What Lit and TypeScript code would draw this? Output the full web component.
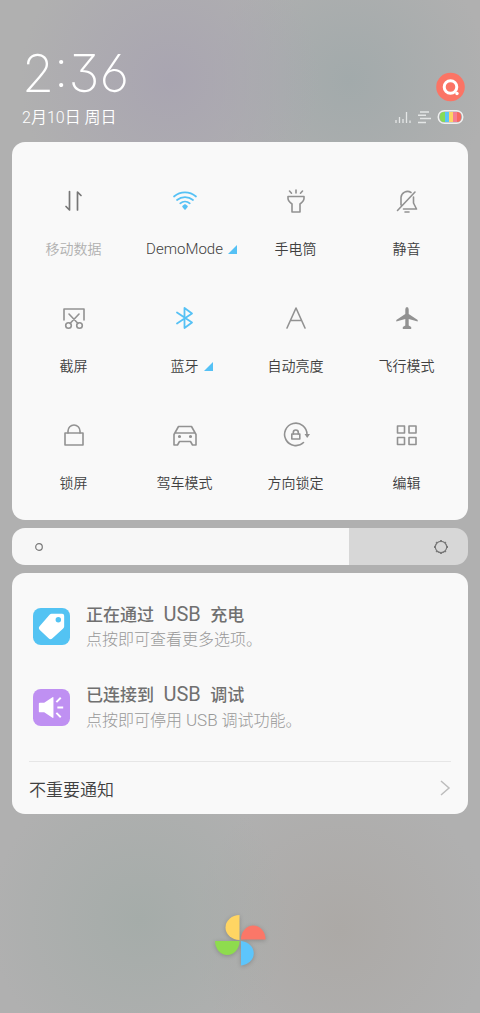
import { LitElement, html, css, svg, nothing, type TemplateResult } from "lit";
import { customElement, property, state } from "lit/decorators.js";
import { classMap } from "lit/directives/class-map.js";

const icons: Record<string, TemplateResult> = {
  data: svg`<path d="M9.500 4.500v18.500l-3.500-3.500M17.500 23V5l3.500 3.500" stroke="#777" stroke-width="1.700"/>`,
  wifi: svg`<path d="M3 9.500a17 17 0 0 1 22 0M6 13a12.500 12.500 0 0 1 16 0M9.200 16.300a7.500 7.500 0 0 1 9.600 0" stroke-width="1.700"/><path d="M14 18l2 1.500-2 2.500-2-2.500z" fill="currentColor"/>`,
  torch: svg`<path d="M6 9.500h16v2q0 2.500-4 5.500v8h-8v-8q-4-3-4-5.500zM14 3v3M7.500 4l2 2.200M20.500 4l-2 2.200"/>`,
  mute: svg`<path d="M8 18V10.500a6.500 6.500 0 0 1 10-5M20.500 10v6l3 6H10.500M12 25h4M4.500 23.500L22 5"/>`,
  capture: svg`<path d="M4 16V5h20v11M9 10l9 9.500M19 10l-9 9.500"/><circle cx="8.500" cy="21.500" r="2.800"/><circle cx="19.500" cy="21.500" r="2.800"/>`,
  bluetooth: svg`<path d="M6 8.500l15 10-7.500 5.500V4l7.500 5.500-15 10" stroke-width="1.800"/>`,
  auto: svg`<path d="M5 24L14 4l9 20M8.500 16.500h11"/>`,
  plane: svg`<path d="M14 3q1.700 0 1.700 2.500v4.500l9 6v1.500l-9-2.500v6.500l2.500 1.500v2H9.800v-2l2.500-1.500V15l-9 2.500V16l9-6V5.500Q12.300 3 14 3z" fill="currentColor" stroke="none"/>`,
  lock: svg`<rect x="5" y="12" width="18" height="12"/><path d="M8 12V10a6 6 0 0 1 12 0v2"/>`,
  car: svg`<path d="M3 24V13.500L7.500 5.500h13l4.500 8V24h-3.500l-2-3.500h-11l-2 3.500zM4 12h20"/><circle cx="8.500" cy="15.500" r=".8"/><circle cx="19.500" cy="15.500" r=".8"/>`,
  rotate: svg`<path d="M21.500 21.500A11.200 11.200 0 1 1 25 13.500"/><path d="M22.500 13h5.500l-2.800 4z" fill="currentColor" stroke="none"/><rect x="9.800" y="13" width="8" height="5"/><path d="M11.300 13v-1.500a2.500 2.500 0 0 1 5 0V13"/>`,
  edit: svg`<rect x="4.500" y="5" width="7" height="7"/><rect x="16" y="5" width="7" height="7"/><rect x="4.500" y="16.500" width="7" height="7"/><rect x="16" y="16.500" width="7" height="7"/>`,
};

interface Tile {
  icon: string;
  label: string;
  on?: boolean;
  dim?: boolean;
}

const tiles: Tile[] = [
  { icon: "data", label: "移动数据", dim: true },
  { icon: "wifi", label: "DemoMode", on: true },
  { icon: "torch", label: "手电筒" },
  { icon: "mute", label: "静音" },
  { icon: "capture", label: "截屏" },
  { icon: "bluetooth", label: "蓝牙", on: true },
  { icon: "auto", label: "自动亮度" },
  { icon: "plane", label: "飞行模式" },
  { icon: "lock", label: "锁屏" },
  { icon: "car", label: "驾车模式" },
  { icon: "rotate", label: "方向锁定" },
  { icon: "edit", label: "编辑" },
];

@customElement("quick-tile")
class QuickTile extends LitElement {
  @property({ attribute: false }) tile!: Tile;

  static styles = css`
    :host { display: block; }
    .tile {
      width: 100%;
      display: flex;
      flex-direction: column;
      align-items: center;
      gap: 24px;
      padding: 0;
      border: 0;
      background: none;
      font: inherit;
      color: #404040;
    }
    .glyph {
      width: 28px;
      height: 28px;
      fill: none;
      stroke: currentColor;
      stroke-width: 1.6;
      stroke-linejoin: round;
      stroke-linecap: round;
      color: #929292;
    }
    .on .glyph { color: #55c1f5; }
    .dim { color: #b0b0b0; }
    .label {
      display: flex;
      align-items: center;
      gap: 5px;
      font-size: 14px;
      line-height: 20px;
      white-space: nowrap;
    }
    .latin { font-size: 15px; }
    .more { width: 9px; height: 9px; fill: #55c1f5; }
    .on .label { padding-left: 14px; }
  `;

  render() {
    const { icon, label, on = false, dim = false } = this.tile;
    const latin = /^[\x20-\x7e]+$/.test(label);
    return html`<button class=${classMap({ tile: true, on, dim })}>
      <svg class="glyph" viewBox="0 0 28 28" aria-hidden="true">${icons[icon]}</svg>
      <span class="label">
        <span class=${classMap({ latin })}>${label}</span>
        ${on ? html`<svg class="more" viewBox="0 0 9 9" aria-hidden="true"><path d="M9 0v9H0z" /></svg>` : nothing}
      </span>
    </button>`;
  }
}

@customElement("brightness-bar")
class BrightnessBar extends LitElement {
  @state() private level = 74;

  static styles = css`
    :host { display: block; }
    .bar {
      display: grid;
      align-items: center;
      grid-template-columns: 1fr auto;
      height: 37px;
      border-radius: 13px;
      overflow: hidden;
      color: #777;
    }
    .range {
      grid-area: 1 / 1 / 2 / 3;
      appearance: none;
      width: 100%;
      height: 100%;
      margin: 0;
      background: linear-gradient(to right, #f7f7f7 var(--level), #d7d7d7 var(--level));
    }
    .range::-webkit-slider-thumb { appearance: none; width: 1px; height: 37px; background: none; }
    .low, .high {
      grid-row: 1;
      width: 16px;
      height: 16px;
      fill: none;
      stroke: currentColor;
      stroke-width: 1.2;
      pointer-events: none;
      z-index: 1;
    }
    .low { grid-column: 1; margin-left: 19px; }
    .high { grid-column: 2; margin-right: 19px; }
  `;

  render() {
    return html`<div class="bar">
      <input class="range" type="range" min="0" max="100" aria-label="亮度" .value=${String(this.level)}
        style="--level: ${this.level}%"
        @input=${(e: Event) => (this.level = Number((e.target as HTMLInputElement).value))} />
      <svg class="low" viewBox="0 0 16 16"><circle cx="8" cy="8" r="3.300" /></svg>
      <svg class="high" viewBox="0 0 16 16">
        <circle cx="8" cy="8" r="5.700" />
        <path stroke-width="1.800" d="M8 1v1M8 14v1M1 8h1M14 8h1M3.200 3.200l.7.7M12.100 12.100l.7.7M3.200 12.800l.7-.7M12.100 3.900l.7-.7" />
      </svg>
    </div>`;
  }
}

@customElement("app-root")
class AppRoot extends LitElement {
  static styles = css`
    :host {
      display: block;
      min-height: 100vh;
      box-sizing: border-box;
      padding: 48px 12px 40px;
      font-family: Roboto, "Noto Sans CJK SC", sans-serif;
      font-weight: 350;
      color: #505050;
      background:
        radial-gradient(circle at 170px 80px, #a9a5b1 0, #a9a5b100 150px),
        radial-gradient(circle at 350px 80px, #a2aaab 0, #a2aaab00 140px),
        radial-gradient(circle at 140px 920px, #a5aca9 0, #a5aca900 150px),
        radial-gradient(circle at 340px 930px, #aca9a6 0, #aca9a600 150px),
        #b0b0b0;
    }
    .page { display: flex; flex-direction: column; gap: 8px; }
    .head {
      display: flex;
      justify-content: space-between;
      padding: 0 2px 6px 10px;
      color: #fff;
    }
    .time {
      font: 200 52px/52px Inter, sans-serif;
      font-feature-settings: "cv09", "cv03";
    }
    .date { font-size: 16px; line-height: 20px; margin-top: 8px; }
    .side {
      display: flex;
      flex-direction: column;
      align-items: flex-end;
      gap: 8px;
      padding-top: 24px;
    }
    .search { width: 30px; height: 30px; padding: 0; border: 0; background: none; }
    .search svg { display: block; }
    .status { display: flex; align-items: center; gap: 6px; padding-right: 2px; }
    .card { background: #f9f9f9; border-radius: 13px; }
    .tiles {
      display: grid;
      grid-template-columns: repeat(4, 1fr);
      row-gap: 45px;
      padding: 45px 6px 27px;
    }
    .notice {
      display: flex;
      align-items: center;
      gap: 16px;
      padding: 0 21px;
      height: 49px;
    }
    .notices {
      display: flex;
      flex-direction: column;
      gap: 32px;
      padding: 29px 0 29px;
    }
    .badge { width: 37px; height: 37px; flex: none; }
    .title {
      margin: 0;
      font-size: 17px;
      font-weight: 500;
      line-height: 25px;
      color: #707070;
      white-space: pre;
    }
    .title .usb { font-size: 20px; font-weight: 400; padding: 0 1px; }
    .text { margin: 0; font-size: 16px; line-height: 24px; color: #989898; font-weight: 300; }
    .text .usb { font-size: 17px; }
    .rest {
      display: flex;
      align-items: center;
      justify-content: space-between;
      margin: 0 17px;
      height: 52px;
      border-top: 1px solid #e6e6e6;
      font-size: 17px;
      color: #404040;
      text-decoration: none;
    }
    .foot { display: flex; justify-content: center; padding-top: 90px; }
    .logo { width: 56px; height: 56px; filter: drop-shadow(0 1px 2px #0003); }
  `;

  render() {
    return html`<main class="page">
      <header class="head">
        <div>
          <div class="time">2:36</div>
          <div class="date">2月10日 周日</div>
        </div>
        <div class="side">
          <button class="search" aria-label="搜索">
            <svg width="30" height="30" viewBox="0 0 30 30">
              <circle cx="14.500" cy="15" r="14.300" fill="#fb7465" />
              <circle cx="14.500" cy="15" r="6.300" fill="none" stroke="#fff" stroke-width="3" />
              <circle cx="21" cy="21.500" r="1.700" fill="#fff" />
            </svg>
          </button>
          <div class="status">
            <svg width="17" height="13" viewBox="0 0 17 13" stroke="#e4e6e6" stroke-width="1.300">
              <path d="M2 9v3M5.500 6v6M9 8v4M12.500 1v11M16 9.500v2.500" />
            </svg>
            <svg width="14" height="13" viewBox="0 0 14 13" stroke="#e4e6e6" stroke-width="1.400">
              <path d="M3 1h9M1 4.300h8M3 7.500h11M1 11.500h8" />
            </svg>
            <svg width="27" height="14" viewBox="0 0 27 14">
              <defs><clipPath id="cell"><rect x="3" y="2" width="21" height="10" rx="4" /></clipPath></defs>
              <rect x="1.200" y=".7" width="24.600" height="12.600" rx="6.300" fill="none" stroke="#f0f0f0" stroke-width="1.400" />
              <g clip-path="url(#cell)">
                <path fill="#86db56" d="M3 2h5v10H3z" /><path fill="#5bc3f7" d="M8 2h4v10H8z" />
                <path fill="#fdd364" d="M12 2h4v10h-4z" /><path fill="#f57f92" d="M16 2h4v10h-4z" />
                <path fill="#f8685f" d="M20 2h4v10h-4z" />
              </g>
            </svg>
          </div>
        </div>
      </header>

      <section class="card tiles">${tiles.map((t) => html`<quick-tile .tile=${t}></quick-tile>`)}</section>

      <brightness-bar></brightness-bar>

      <section class="card">
        <div class="notices">
          <article class="notice">
            <svg class="badge" viewBox="0 0 38 38">
              <rect width="38" height="38" rx="8" fill="#53c3f3" />
              <path fill="#fff" d="M19 6h11q2 0 2 2v11q0 1-1 2L20 31q-2 2-4 0L7 22.500q-2-2 0-4L17 7q1-1 2-1z" />
              <circle cx="26" cy="12" r="2.800" fill="#53c3f3" />
            </svg>
            <div>
              <h2 class="title">正在通过  <span class="usb">USB</span>  充电</h2>
              <p class="text">点按即可查看更多选项。</p>
            </div>
          </article>
          <article class="notice">
            <svg class="badge" viewBox="0 0 38 38">
              <rect width="38" height="38" rx="8" fill="#bf90f2" />
              <path fill="#fff" d="M7 14h4.500L20 8.500q1-.5 1 .5v20q0 1-1 .5L11.500 24H7q-1 0-1-1v-8q0-1 1-1z" />
              <path stroke="#fff" stroke-width="2" d="M24 13.500l4.500-4.500M25 19h6M24 24.500l4.500 4.500" />
            </svg>
            <div>
              <h2 class="title">已连接到  <span class="usb">USB</span>  调试</h2>
              <p class="text">点按即可停用 <span class="usb">USB</span> 调试功能。</p>
            </div>
          </article>
        </div>
        <a class="rest" href="#more">
          不重要通知
          <svg width="12" height="18" viewBox="0 0 12 18" fill="none" stroke="#bdbdbd" stroke-width="1.500"><path d="M2 2l8 7-8 7" /></svg>
        </a>
      </section>

      <footer class="foot">
        <svg class="logo" viewBox="0 0 56 56">
          <path fill="#ffd563" d="M27.500 3v25a14 12.500 0 0 1 0-25z" />
          <path fill="#fb7768" d="M29 27.500a12.200 14 0 0 1 24.500 0z" />
          <path fill="#5dc5fb" d="M29 29a14 12.300 0 0 1 0 24.500z" />
          <path fill="#8edc4e" d="M3 29h24.500a12.200 14 0 0 1-24.500 0z" />
        </svg>
      </footer>
    </main>`;
  }
}
